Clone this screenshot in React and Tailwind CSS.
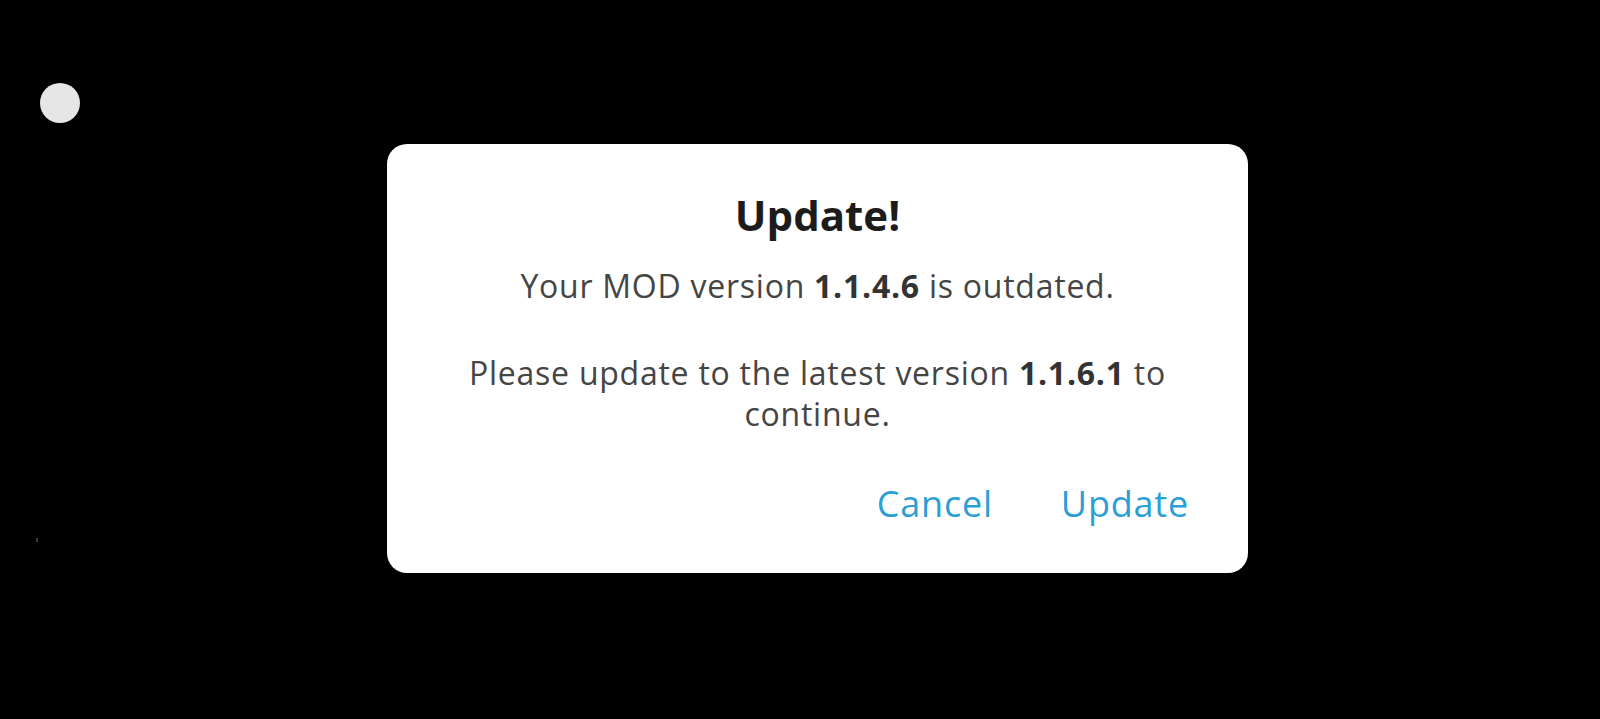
import React from "react";

const UpdateDialog = ({ current, latest, onCancel, onUpdate }) => {
  return (
    <div className="ml-[387px] mt-[21px] w-[861px] h-[429px] rounded-[20px] bg-white pt-[45px] flex flex-col">
      <h2 className="text-center text-[42px] leading-[52px] font-bold text-[#1c1c1c]">Update!</h2>
      <div className="mt-[24px] px-[56px] text-center text-[32px] leading-[41px] tracking-[0.75px] text-[#454545]">
        <p>
          Your MOD version <span className="font-bold text-[#333333]">{current}</span> is outdated.
        </p>
        <p className="mt-[46px]">
          Please update to the latest version <span className="font-bold text-[#333333]">{latest}</span> to continue.
        </p>
      </div>
      <div className="mt-[48px] flex justify-end gap-[68px] pr-[59px] text-[36px] leading-[44px] tracking-[0.8px] font-medium text-[#2a9fd6]">
        <button type="button" onClick={onCancel}>Cancel</button>
        <button type="button" onClick={onUpdate}>Update</button>
      </div>
    </div>
  );
};

export default function App() {
  return (
    <div
      className="relative w-[1600px] h-[719px] overflow-hidden bg-black flex flex-col"
      style={{ fontFamily: '"Open Sans", "Noto Sans", sans-serif' }}
    >
      {/* floating assist button */}
      <div className="ml-[40px] mt-[83px] w-[40px] h-[40px] rounded-full bg-[#e6e6e6]" />
      <UpdateDialog current="1.1.4.6" latest="1.1.6.1" onCancel={() => {}} onUpdate={() => {}} />
      <div className="absolute left-[36px] top-[538px] w-[2px] h-[4px] bg-[#3a3a3a]" />
    </div>
  );
}
